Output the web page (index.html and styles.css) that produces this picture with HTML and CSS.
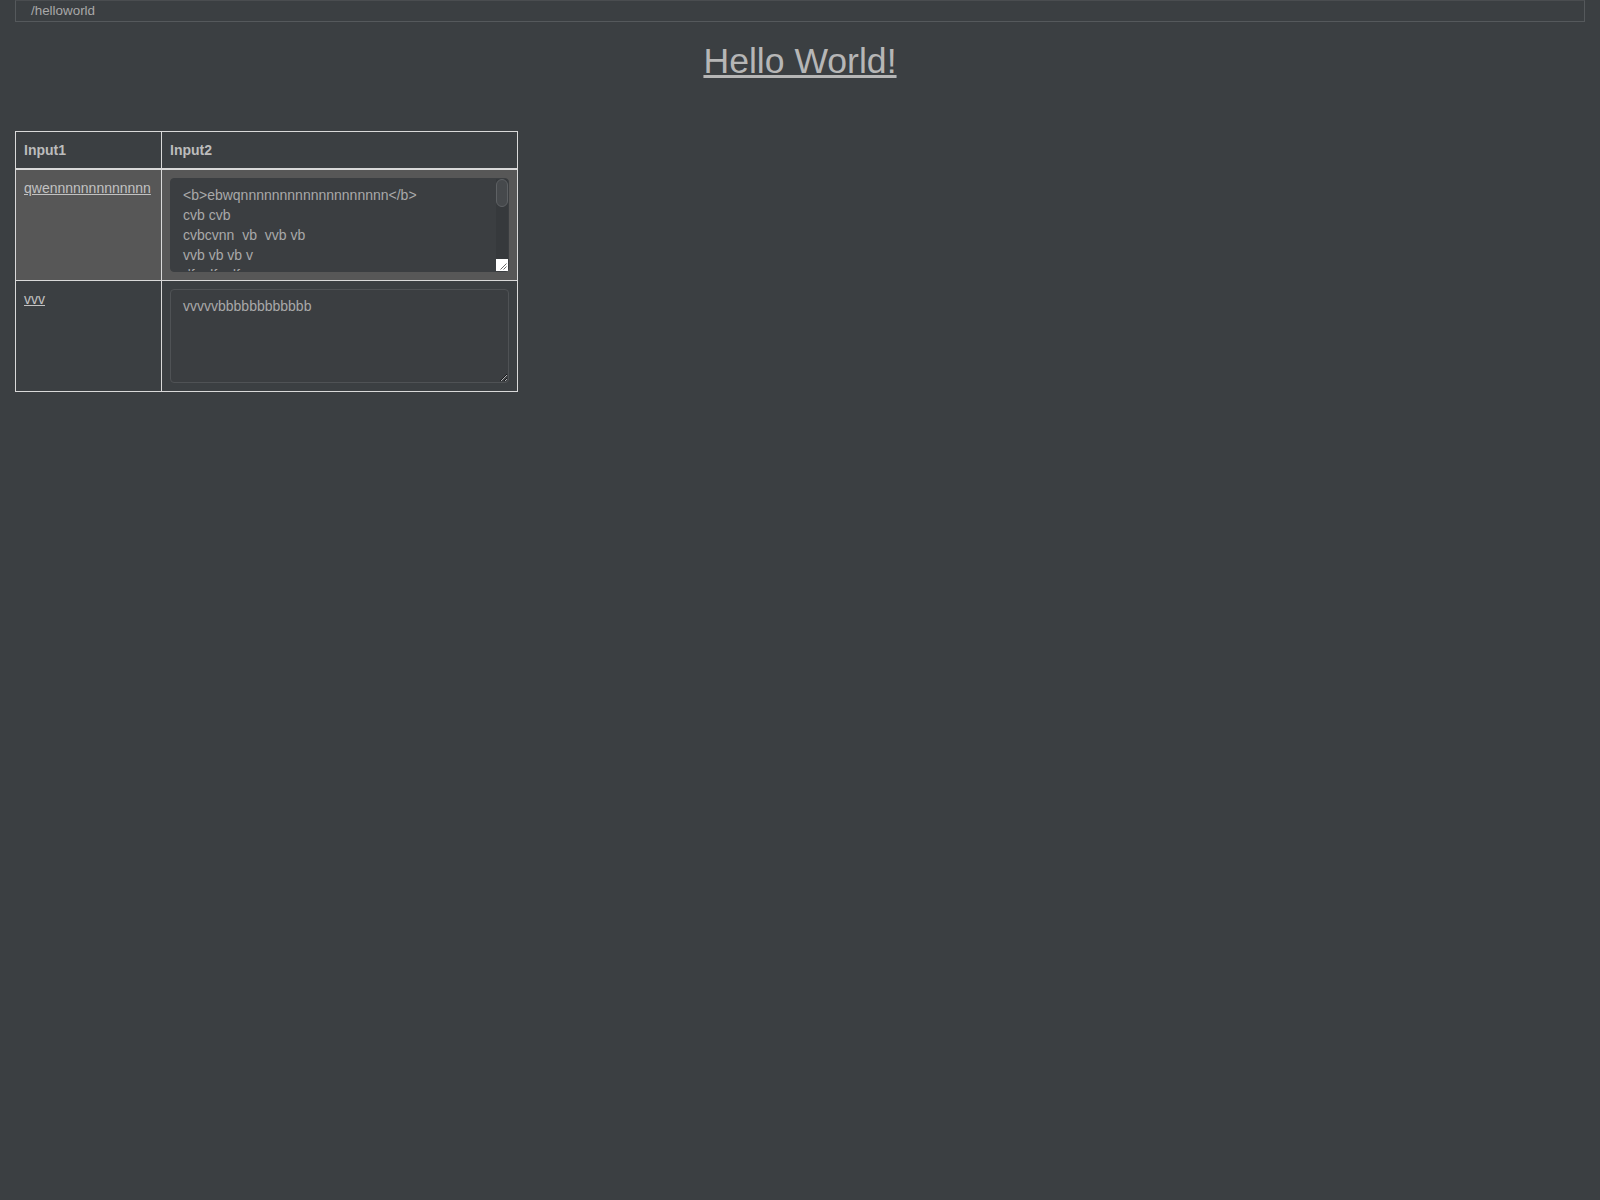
FILE: index.html
```html
<!DOCTYPE html>
<html>
<head>
<meta charset="utf-8">
<title>Hello World</title>
<link rel="stylesheet" href="styles.css">
</head>
<body>
<div class="addr">/helloworld</div>
<h1 class="title"><a href="#">Hello World!</a></h1>
<table class="grid">
  <thead>
    <tr>
      <th class="c1">Input1</th>
      <th class="c2">Input2</th>
    </tr>
  </thead>
  <tbody>
    <tr class="row hover">
      <td class="c1"><a href="#">qwennnnnnnnnnnnn</a></td>
      <td class="c2">
        <div class="ta-wrap">
          <textarea class="ta ta-active" spellcheck="false"><b>ebwqnnnnnnnnnnnnnnnnnnn</b>
cvb cvb
cvbcvnn  vb  vvb vb
vvb vb vb v
dfv dfv df
vb vb
cvb cvbcv
vvb vb
cvbn vb
vb vb vb
cvb
vb vb</textarea>
          <div class="sb"><div class="sb-thumb"></div></div>
          <div class="sb-corner"><svg width="12" height="12" viewBox="0 0 12 12"><path d="M10.5 4.5 L4.5 10.5 M10.5 7.5 L7.5 10.5" stroke="#6a6a6a" stroke-width="1" fill="none"/></svg></div>
        </div>
      </td>
    </tr>
    <tr class="row">
      <td class="c1"><a href="#">vvv</a></td>
      <td class="c2"><textarea class="ta" spellcheck="false">vvvvvbbbbbbbbbbbb</textarea></td>
    </tr>
  </tbody>
</table>
</body>
</html>
```

FILE: styles.css
```css
html, body {
  margin: 0;
  padding: 0;
  background: #3b3f42;
}
body {
  font-family: "Liberation Sans", Arial, sans-serif;
  color: #aaaaaa;
  font-size: 14px;
}
.addr {
  margin: 0 15px;
  height: 20px;
  border: 1px solid #55595c;
  border-top-color: #4a4d50;
  padding-left: 15px;
  font-size: 13.4px;
  line-height: 20px;
  color: #a8a8a8;
}
.title {
  margin: 19px 0 50px;
  font-size: 35.6px;
  line-height: 40px;
  font-weight: normal;
  text-align: center;
}
.title a {
  color: #b6b6b6;
  text-decoration: underline;
}
.grid {
  margin-left: 15px;
  border-spacing: 0;
  border-left: 1px solid #d9d9d9;
  border-top: 1px solid #d9d9d9;
}
.grid th, .grid td {
  border-right: 1px solid #d9d9d9;
  border-bottom: 1px solid #d9d9d9;
  padding: 8px;
  text-align: left;
  vertical-align: top;
  line-height: 20px;
}
.grid th {
  font-weight: bold;
  color: #bcbcbc;
  border-bottom-width: 2px;
}
.c1 { width: 129px; }
.c2 { width: 339px; }
.grid td a {
  color: #c2c2c2;
  text-decoration: underline;
  white-space: nowrap;
}
.row.hover td {
  background: #575757;
}
.ta-wrap {
  position: relative;
  width: 339px;
  height: 94px;
}
.ta {
  display: block;
  box-sizing: border-box;
  width: 339px;
  height: 94px;
  margin: 0;
  padding: 6px 12px;
  border: 1px solid #4f5255;
  border-radius: 4px;
  background: #3b3e41;
  color: #a9a9a9;
  font-family: "Liberation Sans", Arial, sans-serif;
  font-size: 14px;
  line-height: 20px;
  outline: none;
  white-space: pre;
  overflow: hidden;
}
.ta-active {
  border-color: #3b3e41;
  resize: none;
}
.sb {
  position: absolute;
  top: 1px;
  right: 1px;
  width: 12px;
  bottom: 13px;
  background: #36393c;
  border-top-right-radius: 3px;
}
.sb-thumb {
  box-sizing: border-box;
  height: 28px;
  width: 12px;
  background: #46494c;
  border: 1px solid #5e6164;
  border-radius: 6px;
}
.sb-corner {
  position: absolute;
  right: 1px;
  bottom: 1px;
  width: 12px;
  height: 12px;
  background: #ffffff;
}
.sb-corner svg {
  display: block;
}
```
